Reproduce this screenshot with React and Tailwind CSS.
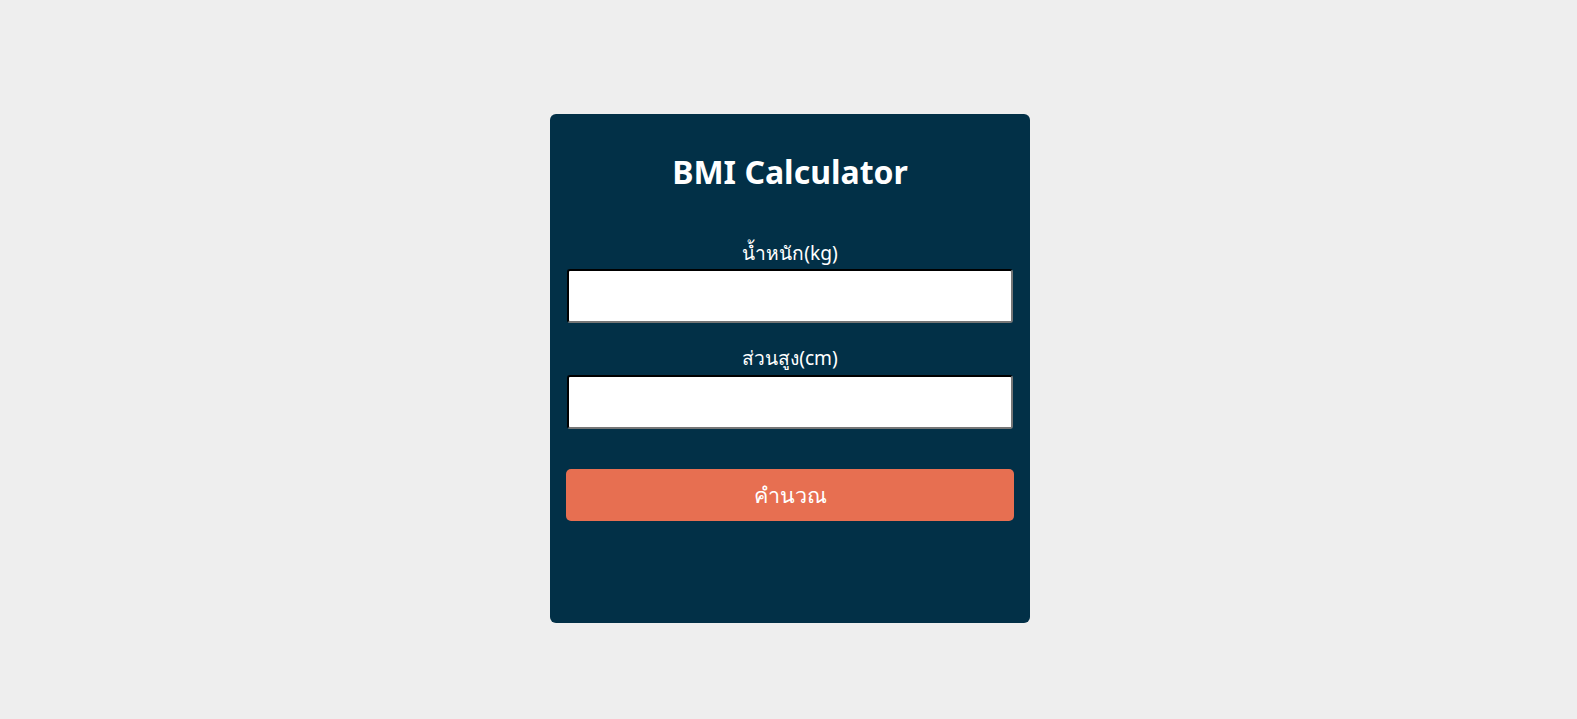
import React, { useState } from 'react';

function App() {
  const [weight, setWeight] = useState('');
  const [height, setHeight] = useState('');
  const [result, setResult] = useState('');

  const calculate = () => {
    const w = parseFloat(weight);
    const h = parseFloat(height) / 100;
    if (w > 0 && h > 0) {
      setResult((w / (h * h)).toFixed(2));
    }
  };

  return (
    <div className="min-h-screen bg-[#eeeeee] flex justify-center items-start pt-[114px] pl-[3px] font-['Noto_Sans',sans-serif]">
      <div className="w-[480px] h-[509px] bg-[#023047] rounded-md px-4 pt-9 text-white text-center">
        <h1 className="text-[32px] leading-[44px] font-bold">BMI Calculator</h1>

        {/* Weight */}
        <label className="block mt-[46px] text-[19.2px] leading-[26px]">น้ำหนัก(kg)</label>
        <input
          type="text"
          value={weight}
          onChange={(e) => setWeight(e.target.value)}
          className="block mx-px mt-[3px] w-[446px] h-[54px] bg-white text-black rounded-[3px] border-2 [border-style:inset] border-t-[#2a2a2a] border-l-[#2a2a2a] border-r-[#767676] border-b-[#767676] px-2"
        />

        {/* Height */}
        <label className="block mt-[22px] text-[19.2px] leading-[26px]">ส่วนสูง(cm)</label>
        <input
          type="text"
          value={height}
          onChange={(e) => setHeight(e.target.value)}
          className="block mx-px mt-1 w-[446px] h-[54px] bg-white text-black rounded-[3px] border-2 [border-style:inset] border-t-[#2a2a2a] border-l-[#2a2a2a] border-r-[#767676] border-b-[#767676] px-2"
        />

        <button
          onClick={calculate}
          className="block w-full mt-10 h-[52px] bg-[#e76f51] rounded-[5px] text-[21.5px] text-white"
        >
          คำนวณ
        </button>

        {result && <p className="mt-6 text-xl">BMI: {result}</p>}
      </div>
    </div>
  );
}

export default App;
